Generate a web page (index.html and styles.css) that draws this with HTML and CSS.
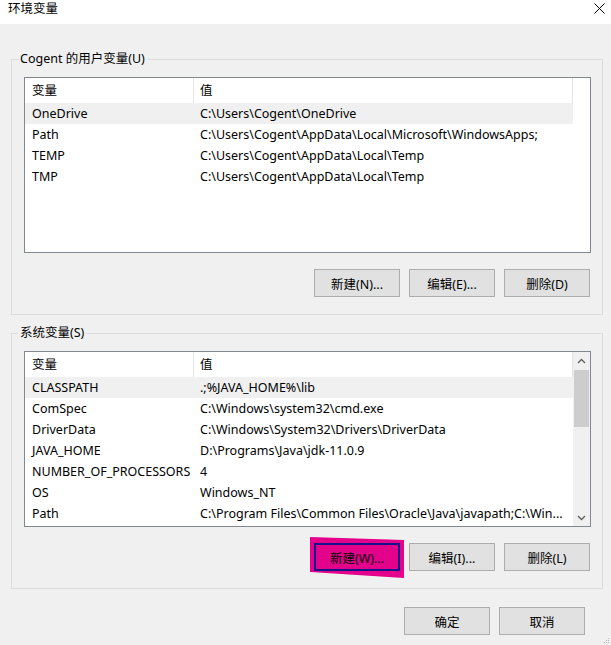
FILE: index.html
```html
<!DOCTYPE html>
<html lang="zh-CN">
<head>
<meta charset="utf-8">
<title>环境变量</title>
<link rel="stylesheet" href="styles.css">
</head>
<body>
<div class="window">
  <div class="titlebar">
    <span class="title">环境变量</span>
    <svg class="close" width="11" height="11" viewBox="0 0 11 11"><path d="M0.5 0.5 L10.5 10.5 M10.5 0.5 L0.5 10.5" stroke="#000" stroke-width="1" fill="none"/></svg>
  </div>
  <div class="main">
    <div class="group">
      <span class="legend">Cogent 的用户变量(U)</span>
      <div class="list">
        <div class="list-body">
          <div class="row head"><span class="c1">变量</span><span class="c2">值</span></div>
          <div class="row sel"><span class="c1">OneDrive</span><span class="c2">C:\Users\Cogent\OneDrive</span></div>
          <div class="row"><span class="c1">Path</span><span class="c2">C:\Users\Cogent\AppData\Local\Microsoft\WindowsApps;</span></div>
          <div class="row"><span class="c1">TEMP</span><span class="c2">C:\Users\Cogent\AppData\Local\Temp</span></div>
          <div class="row"><span class="c1">TMP</span><span class="c2">C:\Users\Cogent\AppData\Local\Temp</span></div>
        </div>
      </div>
      <div class="btnrow">
        <div class="btn">新建(N)...</div>
        <div class="btn">编辑(E)...</div>
        <div class="btn">删除(D)</div>
      </div>
    </div>
    <div class="group">
      <span class="legend">系统变量(S)</span>
      <div class="list">
        <div class="list-body">
          <div class="row head"><span class="c1">变量</span><span class="c2">值</span></div>
          <div class="row sel"><span class="c1">CLASSPATH</span><span class="c2">.;%JAVA_HOME%\lib</span></div>
          <div class="row"><span class="c1">ComSpec</span><span class="c2">C:\Windows\system32\cmd.exe</span></div>
          <div class="row"><span class="c1">DriverData</span><span class="c2">C:\Windows\System32\Drivers\DriverData</span></div>
          <div class="row"><span class="c1">JAVA_HOME</span><span class="c2">D:\Programs\Java\jdk-11.0.9</span></div>
          <div class="row"><span class="c1">NUMBER_OF_PROCESSORS</span><span class="c2">4</span></div>
          <div class="row"><span class="c1">OS</span><span class="c2">Windows_NT</span></div>
          <div class="row"><span class="c1">Path</span><span class="c2">C:\Program Files\Common Files\Oracle\Java\javapath;C:\Win...</span></div>
        </div>
        <div class="scroll">
          <div class="arrow"><svg width="9" height="6" viewBox="0 0 9 6"><path d="M1 5 L4.5 1.5 L8 5" stroke="#606060" stroke-width="1.4" fill="none"/></svg></div>
          <div class="thumb"></div>
          <div class="track"></div>
          <div class="arrow"><svg width="9" height="6" viewBox="0 0 9 6"><path d="M1 1 L4.5 4.5 L8 1" stroke="#606060" stroke-width="1.4" fill="none"/></svg></div>
        </div>
      </div>
      <div class="btnrow">
        <span class="hl">
          <svg class="mark" width="96" height="44" viewBox="0 0 96 44"><polygon points="0,0 94,3 94,41 0,35" fill="#e3008b"/></svg>
          <span class="btn focus">新建(W)...</span>
        </span>
        <div class="btn">编辑(I)...</div>
        <div class="btn">删除(L)</div>
      </div>
    </div>
    <div class="footer">
      <div class="btn">确定</div>
      <div class="btn">取消</div>
    </div>
  </div>
  <svg class="grip" width="6" height="6" viewBox="0 0 6 6"><rect x="4" y="0" width="1" height="1" fill="#b8b8b8"/><rect x="2" y="2" width="1" height="1" fill="#b8b8b8"/><rect x="4" y="2" width="1" height="1" fill="#b8b8b8"/><rect x="0" y="4" width="1" height="1" fill="#b8b8b8"/><rect x="2" y="4" width="1" height="1" fill="#b8b8b8"/><rect x="4" y="4" width="1" height="1" fill="#b8b8b8"/></svg>
</div>
</body>
</html>
```
FILE: styles.css
```css
html, body {
  margin: 0;
  padding: 0;
}
body {
  background: #f0f0f0;
  font-family: "Noto Sans", "Noto Sans CJK SC", sans-serif;
  font-size: 12.5px;
  color: #000;
}
.window {
  position: relative;
  width: 611px;
  height: 645px;
  overflow: hidden;
}
.titlebar {
  height: 24px;
  background: #fff;
  display: flex;
  justify-content: space-between;
  align-items: flex-start;
  padding: 0 6px 0 8px;
  box-sizing: border-box;
}
.title {
  line-height: 18px;
}
.close {
  margin-top: 3px;
}
.main {
  padding: 35px 8px 0 11px;
}
.group {
  position: relative;
  border: 1px solid #dcdcdc;
  padding: 17px 11px 17px 12px;
}
.group + .group {
  margin-top: 18px;
}
.legend {
  position: absolute;
  top: -9px;
  left: 6px;
  padding: 0 2px;
  line-height: 16px;
  background: #f0f0f0;
  white-space: nowrap;
}
.list {
  height: 176px;
  box-sizing: border-box;
  border: 1px solid #828790;
  background: #fff;
  display: flex;
}
.list-body {
  width: 548px;
  flex: none;
}
.row {
  display: flex;
  height: 21px;
  line-height: 21px;
  white-space: nowrap;
}
.row.sel {
  background: #f0f0f0;
}
.row.head {
  height: 25px;
  line-height: 25px;
  background: #fff;
}
.c1 {
  width: 169px;
  box-sizing: border-box;
  padding-left: 7px;
  overflow: hidden;
  flex: none;
}
.c2 {
  width: 379px;
  box-sizing: border-box;
  padding-left: 6px;
  overflow: hidden;
  flex: none;
}
.head .c1, .head .c2 {
  border-right: 1px solid #e5e5e5;
}
.scroll {
  width: 17px;
  flex: none;
  background: #f0f0f0;
  display: flex;
  flex-direction: column;
}
.arrow {
  height: 17px;
  display: flex;
  align-items: center;
  justify-content: center;
}
.thumb {
  height: 57px;
  margin: 1px 1px 0 1px;
  background: #cdcdcd;
}
.track {
  flex: 1;
}
.btnrow {
  margin-top: 16px;
  margin-right: 1px;
  display: flex;
  justify-content: flex-end;
  gap: 9px;
}
.btn {
  width: 86px;
  height: 28px;
  box-sizing: border-box;
  border: 1px solid #adadad;
  background: #e1e1e1;
  display: flex;
  align-items: center;
  justify-content: center;
  white-space: nowrap;
}
.hl {
  position: relative;
  display: block;
}
.mark {
  position: absolute;
  left: -4px;
  top: -6px;
}
.btn.focus {
  position: relative;
  border: 2px solid #14148a;
  background: #e3008b;
}
.footer {
  margin-top: 18px;
  padding-right: 18px;
  display: flex;
  justify-content: flex-end;
  gap: 9px;
}
.grip {
  position: absolute;
  right: 1px;
  bottom: 1px;
}
```
